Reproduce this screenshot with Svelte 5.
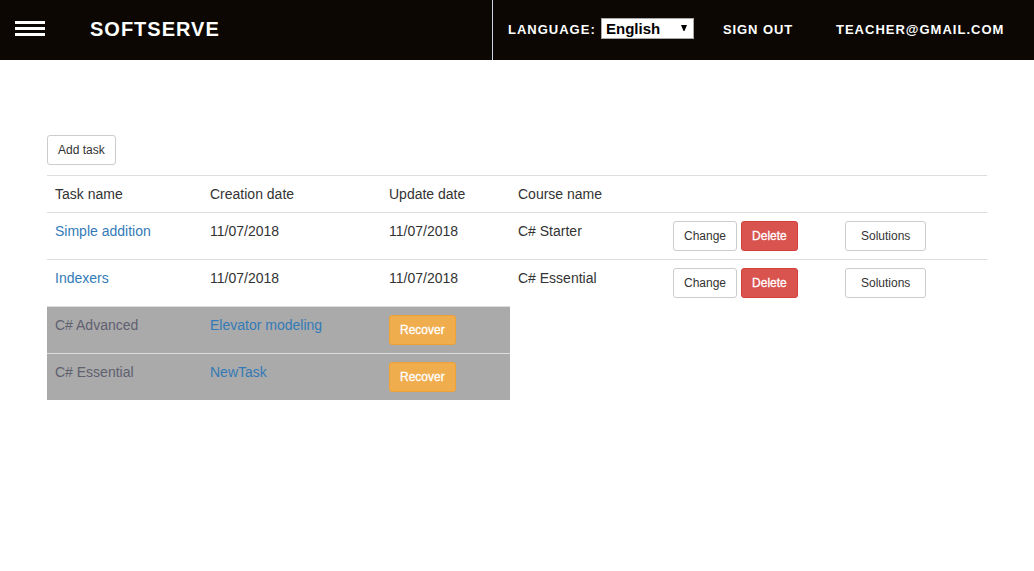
<script>
  const tasks = [
    { name: 'Simple addition', created: '11/07/2018', updated: '11/07/2018', course: 'C# Starter' },
    { name: 'Indexers', created: '11/07/2018', updated: '11/07/2018', course: 'C# Essential' },
  ];
  const deleted = [
    { course: 'C# Advanced', name: 'Elevator modeling' },
    { course: 'C# Essential', name: 'NewTask' },
  ];
</script>

<header>
  <div class="brand">
    <div class="burger"><span></span><span></span><span></span></div>
    <div class="logo">SOFTSERVE</div>
  </div>
  <nav>
    <span class="label">LANGUAGE:</span>
    <div class="select">
      <span>English</span>
      <svg width="6" height="6" viewBox="0 0 6 6"><path d="M0 0h6L3.5 6h-1z" fill="#000" /></svg>
    </div>
    <span class="signout">SIGN OUT</span>
    <span class="email">TEACHER@GMAIL.COM</span>
  </nav>
</header>

<main>
  <button class="btn">Add task</button>
  <table>
    <colgroup>
      <col class="c1" /><col class="c2" /><col class="c3" /><col class="c4" /><col class="c5" /><col class="c6" />
    </colgroup>
    <tbody>
      <tr>
        <td>Task name</td><td>Creation date</td><td>Update date</td><td>Course name</td><td></td><td></td>
      </tr>
      {#each tasks as t}
        <tr>
          <td><span class="link">{t.name}</span></td>
          <td>{t.created}</td>
          <td>{t.updated}</td>
          <td>{t.course}</td>
          <td>
            <div class="actions"><button class="btn">Change</button><button class="btn danger">Delete</button></div>
          </td>
          <td><div class="actions"><button class="btn wide">Solutions</button></div></td>
        </tr>
      {/each}
      {#each deleted as d}
        <tr class="deleted">
          <td>{d.course}</td>
          <td><span class="link">{d.name}</span></td>
          <td><div class="actions"><button class="btn warning">Recover</button></div></td>
        </tr>
      {/each}
    </tbody>
  </table>
</main>

<style>
  :global(body) {
    margin: 0;
    background: #fff;
    font-family: 'Liberation Sans', Arial, sans-serif;
    font-size: 14px;
    line-height: 20px;
    color: #333;
  }
  header {
    display: flex;
    height: 60px;
    background: #0c0703;
    color: #fff;
    font-weight: bold;
  }
  .brand {
    box-sizing: border-box;
    width: 492px;
    display: flex;
    align-items: flex-start;
    padding-left: 15px;
  }
  .burger {
    display: flex;
    flex-direction: column;
    gap: 3px;
    width: 30px;
    margin-top: 21px;
  }
  .burger span {
    height: 3px;
    background: #fff;
  }
  .logo {
    margin: 19px 0 0 45px;
    font-size: 20px;
    letter-spacing: 1px;
  }
  nav {
    flex: 1;
    display: flex;
    align-items: flex-start;
    border-left: 1px solid #ccd5e4;
    padding-left: 15px;
    font-size: 13px;
    letter-spacing: 1px;
    white-space: nowrap;
  }
  nav > span {
    margin-top: 20px;
  }
  .label {
    width: 93px;
  }
  .select {
    box-sizing: border-box;
    display: flex;
    align-items: center;
    justify-content: space-between;
    width: 93px;
    height: 21px;
    margin-top: 18px;
    padding: 0 6px 0 4px;
    border: 1px solid #a9a9a9;
    background: #fff;
    color: #000;
    font-size: 15px;
    letter-spacing: 0;
  }
  .select svg {
    margin-bottom: 2px;
  }
  .signout {
    width: 113px;
    margin-left: 29px;
  }
  .signout {
    letter-spacing: 0.9px;
  }
  main {
    padding: 75px 47px 0;
  }
  .btn {
    display: block;
    box-sizing: border-box;
    height: 30px;
    margin: 0;
    padding: 5px 10px;
    border: 1px solid #ccc;
    border-radius: 3px;
    background: #fff;
    color: #333;
    font-family: inherit;
    font-size: 12px;
    line-height: 18px;
  }
  .danger {
    background: #d9534f;
    border-color: #d43f3a;
    color: #fff;
    -webkit-text-stroke: 0.3px #fff;
  }
  .warning {
    background: #f0ad4e;
    border-color: #eea236;
    color: #fff;
    -webkit-text-stroke: 0.3px #fff;
  }
  .wide {
    padding: 5px 15px;
  }
  .actions {
    display: flex;
    gap: 4px;
  }
  table {
    width: 940px;
    margin-top: 10px;
    table-layout: fixed;
    border-collapse: separate;
    border-spacing: 0;
  }
  .c1 { width: 155px; }
  .c2 { width: 179px; }
  .c3 { width: 129px; }
  .c4 { width: 155px; }
  .c5 { width: 172px; }
  .c6 { width: 150px; }
  td {
    padding: 8px;
    border-top: 1px solid #ddd;
    vertical-align: top;
  }
  .link {
    color: #337ab7;
  }
  .deleted td {
    background: #aaa;
    color: #5f6070;
  }
</style>
